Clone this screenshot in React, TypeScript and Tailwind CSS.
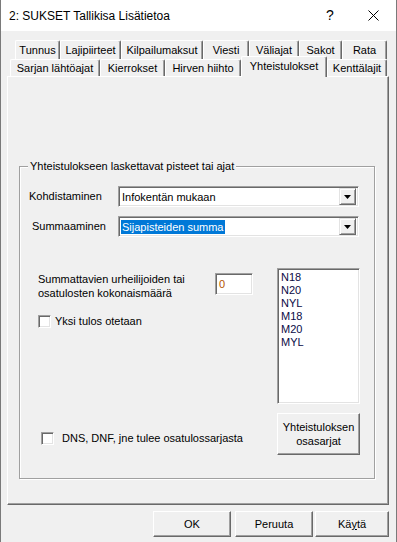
import React from 'react';

const FONT = { fontFamily: '"Liberation Sans", Arial, sans-serif' };

const rowOne = [
  { label: 'Tunnus', w: 'w-[45px]' },
  { label: 'Lajipiirteet', w: 'w-[61px]' },
  { label: 'Kilpailumaksut', w: 'w-[82px]' },
  { label: 'Viesti', w: 'w-[46px]' },
  { label: 'Väliajat', w: 'w-[50px]' },
  { label: 'Sakot', w: 'w-[43px]' },
  { label: 'Rata', w: 'w-[45px]' },
];

const rowTwo = [
  { label: 'Sarjan lähtöajat', w: 'w-[90px]' },
  { label: 'Kierrokset', w: 'w-[65px]' },
  { label: 'Hirven hiihto', w: 'w-[76px]' },
  { label: 'Yhteistulokset', w: 'w-[86px]', active: true },
  { label: 'Kenttälajit', w: 'w-[60px]' },
];

const series = ['N18', 'N20', 'NYL', 'M18', 'M20', 'MYL'];

function Tab({ label, w, active }: { label: string; w: string; active?: boolean }) {
  if (active) {
    return (
      <div
        className={`${w} relative z-10 -mt-[3px] h-[21px] flex items-center justify-center bg-[#f0f0f0] border-t border-l border-white border-r border-r-[#696969] shadow-[inset_-1px_0_#a0a0a0] rounded-t-[2px] pb-[2px]`}
      >
        {label}
      </div>
    );
  }
  return (
    <div
      className={`${w} h-full flex items-center justify-center border-t border-l border-white border-r border-r-[#696969] shadow-[inset_-1px_0_#a0a0a0] rounded-t-[2px] pt-[1px]`}
    >
      {label}
    </div>
  );
}

function Combo({ value, selected }: { value: string; selected?: boolean }) {
  return (
    <div className="w-[241px] h-[21px] flex items-center bg-white border-t border-l border-[#a0a0a0] border-r border-b border-r-white border-b-white shadow-[inset_1px_1px_#696969,inset_-1px_-1px_#e3e3e3] pl-[2px] pr-[2px]">
      <div className="flex-1 flex items-center">
        <span className={selected ? 'bg-[#0078d7] text-white px-[1px] leading-[14px]' : 'px-[1px] leading-[14px]'}>
          {value}
        </span>
      </div>
      <div className="w-[17px] h-[17px] flex items-center justify-center bg-[#f0f0f0] border-t border-l border-[#e3e3e3] border-r border-b border-r-[#696969] border-b-[#696969] shadow-[inset_1px_1px_white,inset_-1px_-1px_#a0a0a0]">
        <svg width="7" height="4" viewBox="0 0 7 4">
          <polygon points="0,0 7,0 3.5,4" fill="#000" />
        </svg>
      </div>
    </div>
  );
}

function CheckBox() {
  return (
    <div className="w-[13px] h-[13px] bg-white border-t border-l border-[#a0a0a0] border-r border-b border-r-white border-b-white shadow-[inset_1px_1px_#696969,inset_-1px_-1px_#e3e3e3]" />
  );
}

function Button({ children, w, h = 'h-[26px]' }: { children: React.ReactNode; w: string; h?: string }) {
  return (
    <div
      className={`${w} ${h} flex items-center justify-center text-center leading-[14px] bg-[#f0f0f0] border-t border-l border-white border-r border-b border-r-[#696969] border-b-[#696969] shadow-[inset_-1px_-1px_#a0a0a0]`}
    >
      {children}
    </div>
  );
}

export default function App() {
  return (
    <div
      className="w-[397px] h-[542px] overflow-hidden bg-[#f0f0f0] text-[11px] text-black border-x border-[#7a7a7a]"
      style={FONT}
    >
      {/* Title bar */}
      <div className="h-[31px] bg-white flex items-center">
        <span className="ml-[8px] text-[12px] flex-1">2: SUKSET Tallikisa Lisätietoa</span>
        <span className="w-[46px] pl-[6px] text-center text-[14px]">?</span>
        <div className="w-[46px] flex items-center justify-center">
          <svg width="11" height="11" viewBox="0 0 11 11">
            <path d="M0.5 0.5 L10.5 10.5 M10.5 0.5 L0.5 10.5" stroke="#000" strokeWidth="1" />
          </svg>
        </div>
      </div>

      <div className="pl-[6px] pt-[9px]">
        {/* Tabs */}
        <div className="w-[382px]">
          <div className="flex h-[19px] pl-[8px]">
            {rowOne.map((t) => (
              <Tab key={t.label} {...t} />
            ))}
          </div>
          <div className="flex h-[17px] pl-[3px]">
            {rowTwo.map((t) => (
              <Tab key={t.label} {...t} />
            ))}
          </div>

          {/* Panel */}
          <div className="h-[429px] border-t border-l border-white border-r border-b border-r-[#696969] border-b-[#696969] shadow-[inset_-1px_-1px_#a0a0a0] pt-[89px] pl-[11px]">
            <div className="relative w-[356px] h-[313px] border border-[#a0a0a0] shadow-[inset_1px_1px_white,1px_1px_white]">
              <span className="absolute -top-[8px] left-[8px] bg-[#f0f0f0] px-[2px] leading-[14px]">
                Yhteistulokseen laskettavat pisteet tai ajat
              </span>

              <div className="flex items-center mt-[19px] pl-[9px]">
                <span className="w-[89px]">Kohdistaminen</span>
                <Combo value="Infokentän mukaan" />
              </div>
              <div className="flex items-center mt-[9px] pl-[9px]">
                <span className="w-[89px] pl-[3px]">Summaaminen</span>
                <Combo value="Sijapisteiden summa" selected />
              </div>

              <div className="flex mt-[31px] pl-[18px]">
                <div className="w-[239px] flex flex-col">
                  <div className="flex items-start">
                    <div className="w-[177px] mt-[4px] leading-[14px]">
                      Summattavien urheilijoiden tai
                      <br />
                      osatulosten kokonaismäärä
                    </div>
                    <div className="mt-[5px] w-[38px] h-[22px] bg-white border-t border-l border-[#a0a0a0] border-r border-b border-r-white border-b-white shadow-[inset_1px_1px_#696969,inset_-1px_-1px_#e3e3e3] pl-[3px] pt-[3px] leading-[14px] text-[#b35300]">
                      0
                    </div>
                  </div>
                  <div className="flex items-center mt-[14px] gap-[4px]">
                    <CheckBox />
                    <span className="leading-[14px]">Yksi tulos otetaan</span>
                  </div>
                  <div className="flex items-center mt-[103px] ml-[3px] gap-[8px]">
                    <CheckBox />
                    <span className="leading-[14px]">DNS, DNF, jne tulee osatulossarjasta</span>
                  </div>
                </div>

                <div className="flex flex-col">
                  <div className="w-[83px] h-[136px] bg-white border-t border-l border-[#a0a0a0] border-r border-b border-r-white border-b-white shadow-[inset_1px_1px_#696969,inset_-1px_-1px_#e3e3e3] pl-[3px] pt-[2px] leading-[13px] text-[#0a0a46]">
                    {series.map((s) => (
                      <div key={s}>{s}</div>
                    ))}
                  </div>
                  <div className="mt-[9px]">
                    <Button w="w-[83px]" h="h-[42px]">
                      Yhteistuloksen
                      <br />
                      osasarjat
                    </Button>
                  </div>
                </div>
              </div>
            </div>
          </div>
        </div>

        {/* Dialog buttons */}
        <div className="flex mt-[6px] pl-[146px]">
          <Button w="w-[78px]">OK</Button>
          <div className="ml-[4px]">
            <Button w="w-[78px]">Peruuta</Button>
          </div>
          <div className="ml-[2px]">
            <Button w="w-[74px]">
              <span>
                Kä<span className="underline">y</span>tä
              </span>
            </Button>
          </div>
        </div>
      </div>
    </div>
  );
}
